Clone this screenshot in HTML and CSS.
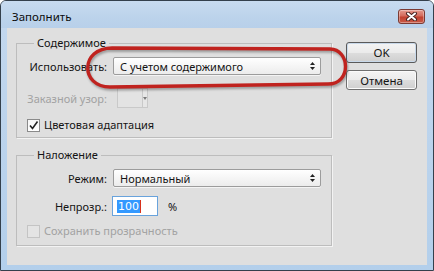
FILE: index.html
```html
<!DOCTYPE html>
<html lang="ru">
<head>
    <meta charset="UTF-8" />
    <title>Заполнить</title>
    <link rel="stylesheet" href="styles.css">
</head>
<body>
    <div class="window">
        <div class="titlebar">
            <span class="title">Заполнить</span>
            <button class="close-btn" aria-label="Закрыть">
                <svg width="13" height="9" viewBox="0 0 13 9">
                    <path d="M3 1.5 L10 7.5 M10 1.5 L3 7.5" stroke="#4a2320" stroke-width="4" stroke-linecap="round" />
                    <path d="M3 1.5 L10 7.5 M10 1.5 L3 7.5" stroke="#ffffff" stroke-width="2" stroke-linecap="round" />
                </svg>
            </button>
        </div>

        <div class="content">
            <div class="groups">
                <fieldset class="group group-contents">
                    <legend>Содержимое</legend>

                    <div class="row row-use">
                        <span class="field-label">Использовать:</span>
                        <div class="select">
                            <span>С учетом содержимого</span>
                            <svg class="select-arrows" width="5" height="8" viewBox="0 0 5 8">
                                <polygon points="0,3 2.5,0 5,3" fill="#222" />
                                <polygon points="0,5 2.5,8 5,5" fill="#222" />
                            </svg>
                        </div>
                    </div>

                    <div class="row row-pattern is-disabled">
                        <span class="field-label">Заказной узор:</span>
                        <div class="pattern-picker">
                            <span class="pattern-swatch"></span>
                            <span class="pattern-arrow">
                                <svg width="4" height="3" viewBox="0 0 4 3"><polygon points="0,0 4,0 2,3" fill="#7a7a7a" /></svg>
                            </span>
                        </div>
                    </div>

                    <label class="check row-adapt">
                        <span class="checkbox">
                            <svg width="11" height="11" viewBox="0 0 11 11">
                                <path d="M2 5.5 L4.5 8.5 L9.5 1.5" fill="none" stroke="#222" stroke-width="1.6" />
                            </svg>
                        </span>
                        Цветовая адаптация
                    </label>
                </fieldset>

                <fieldset class="group group-blend">
                    <legend>Наложение</legend>

                    <div class="row row-mode">
                        <span class="field-label">Режим:</span>
                        <div class="select">
                            <span>Нормальный</span>
                            <svg class="select-arrows" width="5" height="8" viewBox="0 0 5 8">
                                <polygon points="0,3 2.5,0 5,3" fill="#222" />
                                <polygon points="0,5 2.5,8 5,5" fill="#222" />
                            </svg>
                        </div>
                    </div>

                    <div class="row row-opacity">
                        <span class="field-label">Непрозр.:</span>
                        <div class="number-input">
                            <span class="selected-text">100</span><span class="caret"></span>
                        </div>
                        <span class="unit">%</span>
                    </div>

                    <label class="check row-keep is-disabled">
                        <span class="checkbox checkbox-off"></span>
                        Сохранить прозрачность
                    </label>
                </fieldset>
            </div>

            <div class="buttons">
                <button class="btn btn-default">OK</button>
                <button class="btn">Отмена</button>
            </div>
        </div>

        <!-- red marker drawn over the screenshot -->
        <svg class="annotation" width="434" height="271" viewBox="0 0 434 271">
            <path d="M112 48 L330 49 C350 49 352 84 328 84 L110 87 C80 87 80 48 112 48 Z"
                  fill="none" stroke="#c0231f" stroke-width="3.4" />
        </svg>
    </div>
</body>
</html>
```

FILE: styles.css
```css
* {
    box-sizing: border-box;
}

body {
    margin: 0;
    font-family: "Noto Sans", "Open Sans", sans-serif;
    font-size: 11px;
    color: #141414;
    background: #ffffff;
}

.window {
    position: relative;
    width: 434px;
    height: 271px;
    display: flex;
    flex-direction: column;
    border: 1px solid #34404c;
    border-radius: 6px 6px 0 0;
    background: linear-gradient(#c4d8ee, #b3cfeb);
    overflow: hidden;
}

.titlebar {
    height: 27px;
    display: flex;
    justify-content: space-between;
    align-items: flex-start;
    padding: 0 8px 0 11px;
    background: linear-gradient(#c8dbf0 0%, #bcd3eb 60%, #b8d0ea 100%);
}

    .titlebar .title {
        margin-top: 8px;
        font-size: 11.5px;
        line-height: 16px;
        color: #0c0c0c;
    }

.close-btn {
    margin-top: 8px;
    width: 27px;
    height: 15px;
    padding: 0;
    display: flex;
    align-items: center;
    justify-content: center;
    border: 1px solid #7b3a33;
    border-radius: 3px;
    background: linear-gradient(#e59a8e 0%, #d46b5c 45%, #c2412f 55%, #c85a48 100%);
    box-shadow: inset 0 0 0 1px rgba(255, 255, 255, 0.35);
}

.content {
    flex: 1;
    display: flex;
    align-items: flex-start;
    margin: 0 6px 5px 6px;
    padding: 7px 0 0 9px;
    background: #dfdfdf;
}

.groups {
    width: 316px;
}

.group {
    margin: 0;
    padding: 0 0 4px 0;
    min-width: 0;
    border: 1px solid #bdbdbd;
    box-shadow: 1px 1px 0 #f3f3f3;
}

    .group legend {
        margin-left: 17px;
        padding: 0 3px;
        line-height: 16px;
    }

.group-blend {
    margin-top: 9px;
    padding-bottom: 6px;
}

.row {
    display: flex;
    align-items: center;
}

.field-label {
    width: 90px;
    margin-right: 6px;
    text-align: right;
    white-space: nowrap;
}

.is-disabled,
.is-disabled .field-label {
    color: #a2a2a2;
}

.select {
    width: 208px;
    height: 18px;
    display: flex;
    align-items: center;
    justify-content: space-between;
    padding: 0 5px 0 6px;
    border: 1px solid #9c9c9c;
    border-radius: 2px;
    background: linear-gradient(#ffffff, #ececec);
    box-shadow: 0 1px 0 #f4f4f4;
}

.row-use {
    margin-top: 6px;
}

.row-pattern {
    margin-top: 13px;
}

.pattern-picker {
    margin-left: 4px;
    height: 20px;
    display: flex;
}

.pattern-swatch {
    width: 25px;
    border: 1px solid #c9c9c9;
    border-right: none;
    background: #e3e3e3;
}

.pattern-arrow {
    width: 6px;
    display: flex;
    align-items: center;
    justify-content: center;
    border: 1px solid #c9c9c9;
    background: #e6e6e6;
}

.check {
    display: flex;
    align-items: center;
    gap: 4px;
    margin-left: 10px;
    line-height: 16px;
}

.row-adapt {
    margin-top: 9px;
}

.checkbox {
    width: 13px;
    height: 13px;
    display: flex;
    align-items: center;
    justify-content: center;
    border: 1px solid #8a8a8a;
    background: linear-gradient(#f6f6f6, #ffffff);
}

.checkbox-off {
    border-color: #c4c4c4;
    background: #e4e4e4;
}

.row-mode {
    margin-top: 6px;
}

.row-opacity {
    margin-top: 9px;
}

    .row-opacity .field-label {
        margin-right: 5px;
    }

.number-input {
    width: 46px;
    height: 20px;
    display: flex;
    align-items: center;
    padding-left: 4px;
    border: 1px solid #69a3dc;
    background: #ffffff;
}

.selected-text {
    height: 13px;
    line-height: 13px;
    padding: 0 1px;
    background: #3399ff;
    color: #ffffff;
    font-family: "DejaVu Sans", sans-serif;
    font-size: 11px;
}

.caret {
    width: 1px;
    height: 13px;
    background: #d8321c;
}

.unit {
    margin-left: 10px;
}

.row-keep {
    margin-top: 7px;
}

.buttons {
    display: flex;
    flex-direction: column;
    gap: 7px;
    margin: 7px 0 0 14px;
}

.btn {
    width: 71px;
    height: 20px;
    padding: 0;
    font-family: inherit;
    font-size: 11.5px;
    color: #141414;
    border: 1px solid #707070;
    border-radius: 3px;
    background: linear-gradient(#f4f4f4 0%, #ebebeb 50%, #dddddd 51%, #cfcfcf 100%);
    box-shadow: inset 0 0 0 1px #fbfbfb;
}

.btn-default {
    height: 21px;
    border-color: #5a5a5a;
    box-shadow: inset 0 0 0 1px #c9d9ea;
}

.annotation {
    position: absolute;
    top: -1px;
    left: -1px;
    pointer-events: none;
    filter: drop-shadow(1px 2px 1px rgba(0, 0, 0, 0.3));
}
```
